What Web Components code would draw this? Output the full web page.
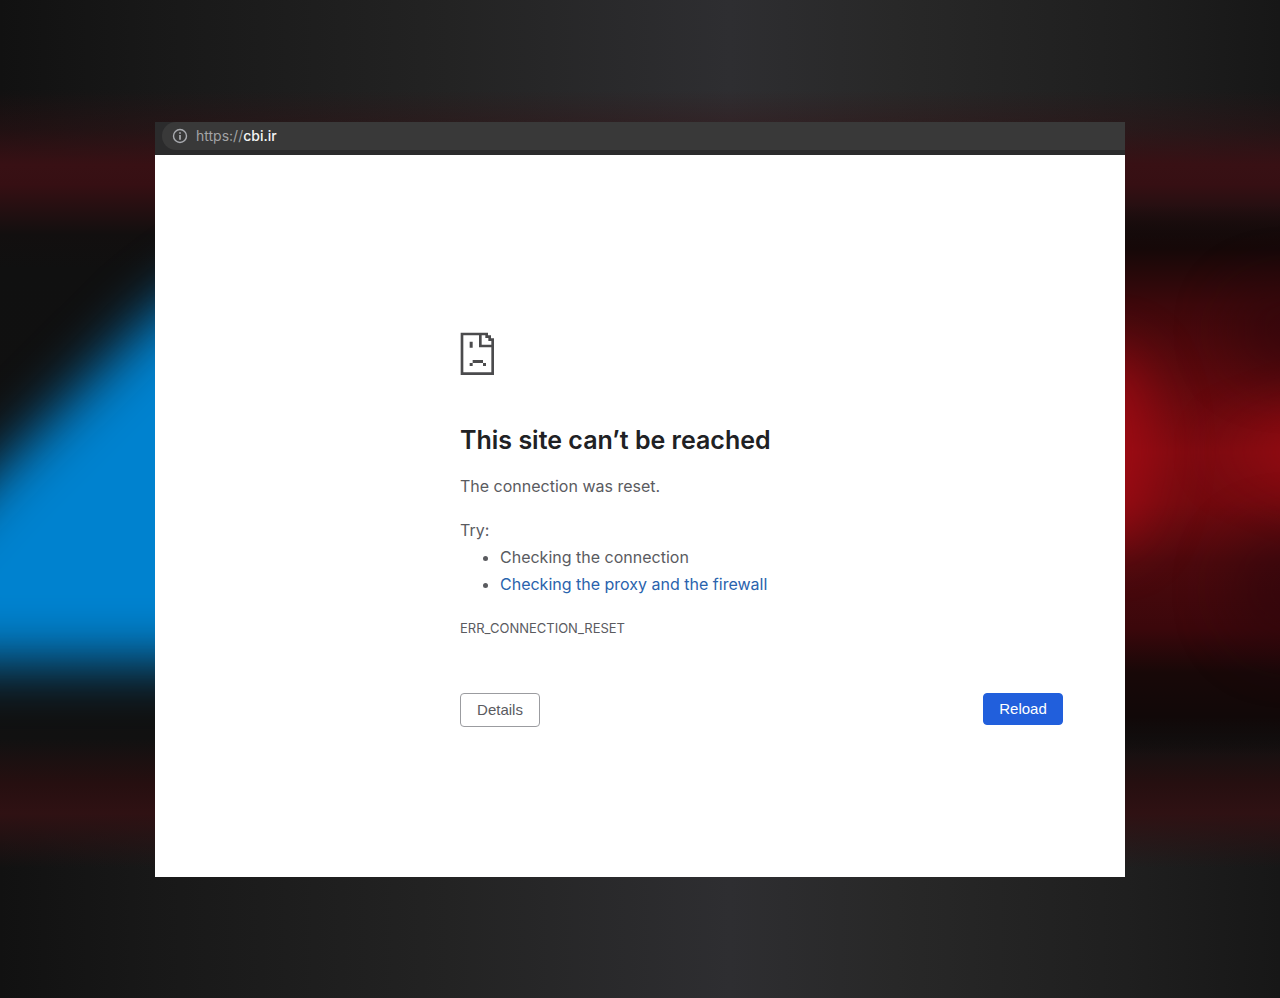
<!DOCTYPE html>
<html lang="en">
<head>
  <meta charset="utf-8">
  <meta name="viewport" content="width=device-width, initial-scale=1">
  <title>cbi.ir</title>
  <style>
    body {
      margin: 0;
      font-family: Inter, "Liberation Sans", sans-serif;
      background-color: #1a1a1b;
    }
  </style>
</head>
<body>
  <blurred-stage>
    <browser-window>
      <address-bar slot="toolbar" scheme="https://" host="cbi.ir"></address-bar>
      <error-page code="ERR_CONNECTION_RESET">
        <span slot="title">This site can’t be reached</span>
        <span slot="summary">The connection was reset.</span>
        <action-button slot="actions">Details</action-button>
        <action-button slot="actions" primary>Reload</action-button>
      </error-page>
    </browser-window>
  </blurred-stage>

  <script>
    /**
     * Attaches an open shadow root with the given markup.
     */
    function render(host, html) {
      const template = document.createElement('template');
      template.innerHTML = html;
      host.attachShadow({ mode: 'open' }).appendChild(template.content.cloneNode(true));
    }

    /**
     * Full page backdrop: dark gradient, red bands and out-of-focus shapes.
     */
    class BlurredStage extends HTMLElement {
      constructor() {
        super();
        render(this, `
          <style>
            :host {
              position: relative;
              display: flex;
              box-sizing: border-box;
              min-height: 100vh;
              padding: 122px 155px 121px;
              overflow: hidden;
            }

            .backdrop {
              position: absolute;
              inset: 0;
              width: 100%;
              height: 100%;
            }

            ::slotted(*) {
              position: relative;
              flex: 1;
            }
          </style>
          <svg class="backdrop" viewBox="0 0 1280 998" preserveAspectRatio="none" aria-hidden="true">
            <defs>
              <linearGradient id="base">
                <stop offset="0" stop-color="#111111"/>
                <stop offset="0.12" stop-color="#181818"/>
                <stop offset="0.35" stop-color="#232323"/>
                <stop offset="0.57" stop-color="#2e2e31"/>
                <stop offset="0.7" stop-color="#282828"/>
                <stop offset="0.88" stop-color="#1f1f1f"/>
                <stop offset="1" stop-color="#171717"/>
              </linearGradient>
              <linearGradient id="bands" x2="0" y2="1">
                <stop offset="0.09" stop-color="#381014" stop-opacity="0"/>
                <stop offset="0.13" stop-color="#381014" stop-opacity="0.4"/>
                <stop offset="0.165" stop-color="#381014"/>
                <stop offset="0.185" stop-color="#360f13"/>
                <stop offset="0.235" stop-color="#120f0f"/>
                <stop offset="0.27" stop-color="#101010"/>
                <stop offset="0.7" stop-color="#101111"/>
                <stop offset="0.74" stop-color="#111111"/>
                <stop offset="0.785" stop-color="#260f10"/>
                <stop offset="0.815" stop-color="#2f1113"/>
                <stop offset="0.87" stop-color="#2e1113" stop-opacity="0"/>
              </linearGradient>
              <linearGradient id="glow" x2="0" y2="1">
                <stop offset="0" stop-color="#170707" stop-opacity="0"/>
                <stop offset="0.08" stop-color="#160808"/>
                <stop offset="0.18" stop-color="#3c080b"/>
                <stop offset="0.32" stop-color="#5c090d"/>
                <stop offset="0.45" stop-color="#7c0a10"/>
                <stop offset="0.54" stop-color="#720a0f"/>
                <stop offset="0.65" stop-color="#4c090d"/>
                <stop offset="0.77" stop-color="#3b070b"/>
                <stop offset="0.85" stop-color="#180808"/>
                <stop offset="0.93" stop-color="#110808"/>
                <stop offset="1" stop-color="#110808" stop-opacity="0"/>
              </linearGradient>
              <filter id="soft" x="-100%" y="-100%" width="300%" height="300%" color-interpolation-filters="sRGB">
                <feGaussianBlur stdDeviation="28"/>
              </filter>
            </defs>
            <rect width="1280" height="998" fill="url(#base)"/>
            <rect width="1280" height="998" fill="url(#bands)"/>
            <path d="M-160 645L0 468L155 314L300 205V662H-160Z" fill="#0082cf" filter="url(#soft)"/>
            <rect x="1000" y="205" width="280" height="550" fill="url(#glow)"/>
            <ellipse cx="1110" cy="448" rx="45" ry="100" fill="#a80b14" opacity="0.8" filter="url(#soft)"/>
            <path d="M1215 450L1350 400V505Z" fill="#9c0b12" opacity="0.8" filter="url(#soft)"/>
            <ellipse cx="1290" cy="590" rx="60" ry="60" fill="#28050b" opacity="0.5" filter="url(#soft)"/>
            <ellipse cx="1290" cy="330" rx="60" ry="45" fill="#28050b" opacity="0.5" filter="url(#soft)"/>
          </svg>
          <slot></slot>
        `);
      }
    }

    /**
     * Window frame with a toolbar slot above the page content.
     */
    class BrowserWindow extends HTMLElement {
      constructor() {
        super();
        render(this, `
          <style>
            :host {
              display: flex;
              flex-direction: column;
              background-color: #fff;
            }

            main {
              flex: 1;
            }
          </style>
          <slot name="toolbar"></slot>
          <main><slot></slot></main>
        `);
      }
    }

    /**
     * Dark address bar with the info icon and the current URL.
     */
    class AddressBar extends HTMLElement {
      constructor() {
        super();
        render(this, `
          <style>
            :host {
              display: block;
              padding: 0 0 5px 7px;
              background-color: #2b2b2c;
            }

            .bar {
              display: flex;
              align-items: center;
              gap: 8px;
              height: 28px;
              padding-left: 10px;
              border-radius: 14px 0 0 14px;
              background-color: #393939;
              color: #a3a4a6;
              font-size: 14px;
              line-height: 20px;
            }

            .bar__host {
              color: #f4f4f4;
              font-weight: 500;
            }
          </style>
          <div class="bar">
            <svg width="16" height="16" viewBox="0 0 16 16" fill="none" stroke="#a9abb0" aria-hidden="true">
              <circle cx="8" cy="8" r="6.5" stroke-width="1.4"/>
              <path d="M8 7V11.8M8 4.2V5.8" stroke-width="1.7"/>
            </svg>
            <div class="bar__url"><span class="bar__scheme"></span><span class="bar__host"></span></div>
          </div>
        `);
        this.shadowRoot.querySelector('.bar__scheme').textContent = this.getAttribute('scheme');
        this.shadowRoot.querySelector('.bar__host').textContent = this.getAttribute('host');
      }
    }

    /**
     * Network error message with suggestions and actions.
     */
    class ErrorPage extends HTMLElement {
      constructor() {
        super();
        render(this, `
          <style>
            :host {
              display: block;
              padding: 177px 62px 0 305px;
              color: #5a5b5f;
              font-size: 16px;
              line-height: 27px;
            }

            .icon {
              display: block;
              width: 34px;
              height: 43px;
            }

            h1 {
              margin: 48px 0 16px;
              color: #202124;
              font-size: 25px;
              font-weight: 600;
              line-height: 34px;
            }

            p {
              margin: 0;
            }

            .try {
              margin-top: 17px;
            }

            ul {
              margin: 0;
              padding-left: 40px;
            }

            a {
              color: #2a63ad;
              text-decoration: none;
            }

            .code {
              margin-top: 17px;
              font-size: 13px;
            }

            .actions {
              display: flex;
              justify-content: space-between;
              align-items: flex-start;
              margin-top: 51px;
            }
          </style>
          <svg class="icon" viewBox="0 0 102 129" fill="#4b4b4d" aria-hidden="true">
            <path d="M2 2H84V10H93V19H102V129H2ZM10 10V121H94V46H57V10ZM65 10V38H94V27H85V18H76V10Z" fill-rule="evenodd"/>
            <path d="M29 29H38V47H29ZM38 84H69V93H38ZM29 93H38V102H29ZM69 93H78V102H69Z"/>
          </svg>
          <h1><slot name="title"></slot></h1>
          <p><slot name="summary"></slot></p>
          <p class="try">Try:</p>
          <ul>
            <li>Checking the connection</li>
            <li><a href="#proxy">Checking the proxy and the firewall</a></li>
          </ul>
          <p class="code"></p>
          <div class="actions"><slot name="actions"></slot></div>
        `);
        this.shadowRoot.querySelector('.code').textContent = this.getAttribute('code');
      }
    }

    /**
     * Outlined button, filled when it has the "primary" attribute.
     */
    class ActionButton extends HTMLElement {
      constructor() {
        super();
        render(this, `
          <style>
            :host {
              display: block;
            }

            button {
              min-width: 80px;
              height: 34px;
              padding: 0 15px;
              border: 1px solid #9b9ca0;
              border-radius: 4px;
              background-color: #fff;
              color: #5a5b5f;
              font-family: "Liberation Sans", Arial, sans-serif;
              font-size: 15px;
              line-height: 20px;
              cursor: pointer;
            }

            :host([primary]) button {
              height: 32px;
              border-color: #215fdc;
              background-color: #215fdc;
              color: #fff;
            }
          </style>
          <button type="button"><slot></slot></button>
        `);
      }
    }

    customElements.define('blurred-stage', BlurredStage);
    customElements.define('browser-window', BrowserWindow);
    customElements.define('address-bar', AddressBar);
    customElements.define('error-page', ErrorPage);
    customElements.define('action-button', ActionButton);
  </script>
</body>
</html>
